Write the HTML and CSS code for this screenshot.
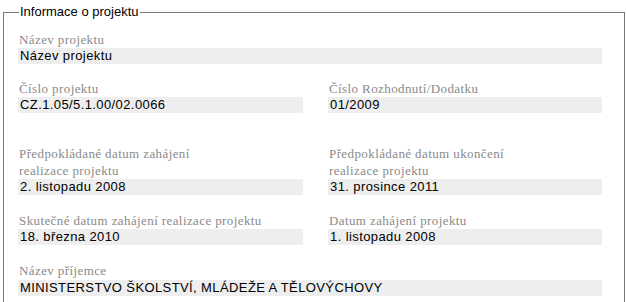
FILE: index.html
```html
<!DOCTYPE html>
<html lang="cs">
<head>
<meta charset="utf-8">
<title>Informace o projektu</title>
<link rel="stylesheet" href="styles.css">
</head>
<body>
<fieldset class="box">
  <legend class="box-title">Informace o projektu</legend>
  <div class="grid">
    <div class="field wide first">
      <div class="label">Název projektu</div>
      <div class="value">Název projektu</div>
    </div>
    <div class="field">
      <div class="label">Číslo projektu</div>
      <div class="value">CZ.1.05/5.1.00/02.0066</div>
    </div>
    <div class="field">
      <div class="label">Číslo Rozhodnutí/Dodatku</div>
      <div class="value">01/2009</div>
    </div>
    <div class="field spaced">
      <div class="label">Předpokládané datum zahájení<br>realizace projektu</div>
      <div class="value">2. listopadu 2008</div>
    </div>
    <div class="field spaced">
      <div class="label">Předpokládané datum ukončení<br>realizace projektu</div>
      <div class="value">31. prosince 2011</div>
    </div>
    <div class="field">
      <div class="label">Skutečné datum zahájení realizace projektu</div>
      <div class="value">18. března 2010</div>
    </div>
    <div class="field">
      <div class="label">Datum zahájení projektu</div>
      <div class="value">1. listopadu 2008</div>
    </div>
    <div class="field wide last">
      <div class="label">Název příjemce</div>
      <div class="value">MINISTERSTVO ŠKOLSTVÍ, MLÁDEŽE A TĚLOVÝCHOVY</div>
    </div>
  </div>
</fieldset>
</body>
</html>
```
FILE: styles.css
```css
html, body {
  margin: 0;
  padding: 0;
  background: #ffffff;
}
body {
  font-family: "Liberation Sans", Arial, sans-serif;
  font-size: 13px;
  color: #000000;
  overflow: hidden;
}
.box {
  margin: 5px 1px 0 3px;
  padding: 0 0 40px 14px;
  border: 1px solid #7a7a7a;
  min-height: 300px;
}
.box-title {
  margin-left: 1px;
  padding: 0 1px;
  font-family: "Liberation Sans", Arial, sans-serif;
  font-size: 13px;
  letter-spacing: 0;
  line-height: 14px;
  color: #000000;
}
.grid {
  display: grid;
  grid-template-columns: 285px 274px;
  column-gap: 25px;
  row-gap: 17px;
  padding-top: 12px;
}
.field {
  display: flex;
  flex-direction: column;
}
.wide {
  grid-column: 1 / -1;
}
.first {
  margin-bottom: -1px;
}
.spaced {
  margin-top: 15px;
}
.last .value {
  margin-top: 1px;
}
.label {
  font-family: "Liberation Serif", "Times New Roman", serif;
  font-size: 13px;
  letter-spacing: 0.4px;
  line-height: 17px;
  color: #8a8a8a;
  padding-left: 1px;
}
.value {
  height: 16px;
  line-height: 16px;
  background: #eeeeee;
  padding-left: 2px;
  letter-spacing: 0.4px;
  white-space: nowrap;
}
```
